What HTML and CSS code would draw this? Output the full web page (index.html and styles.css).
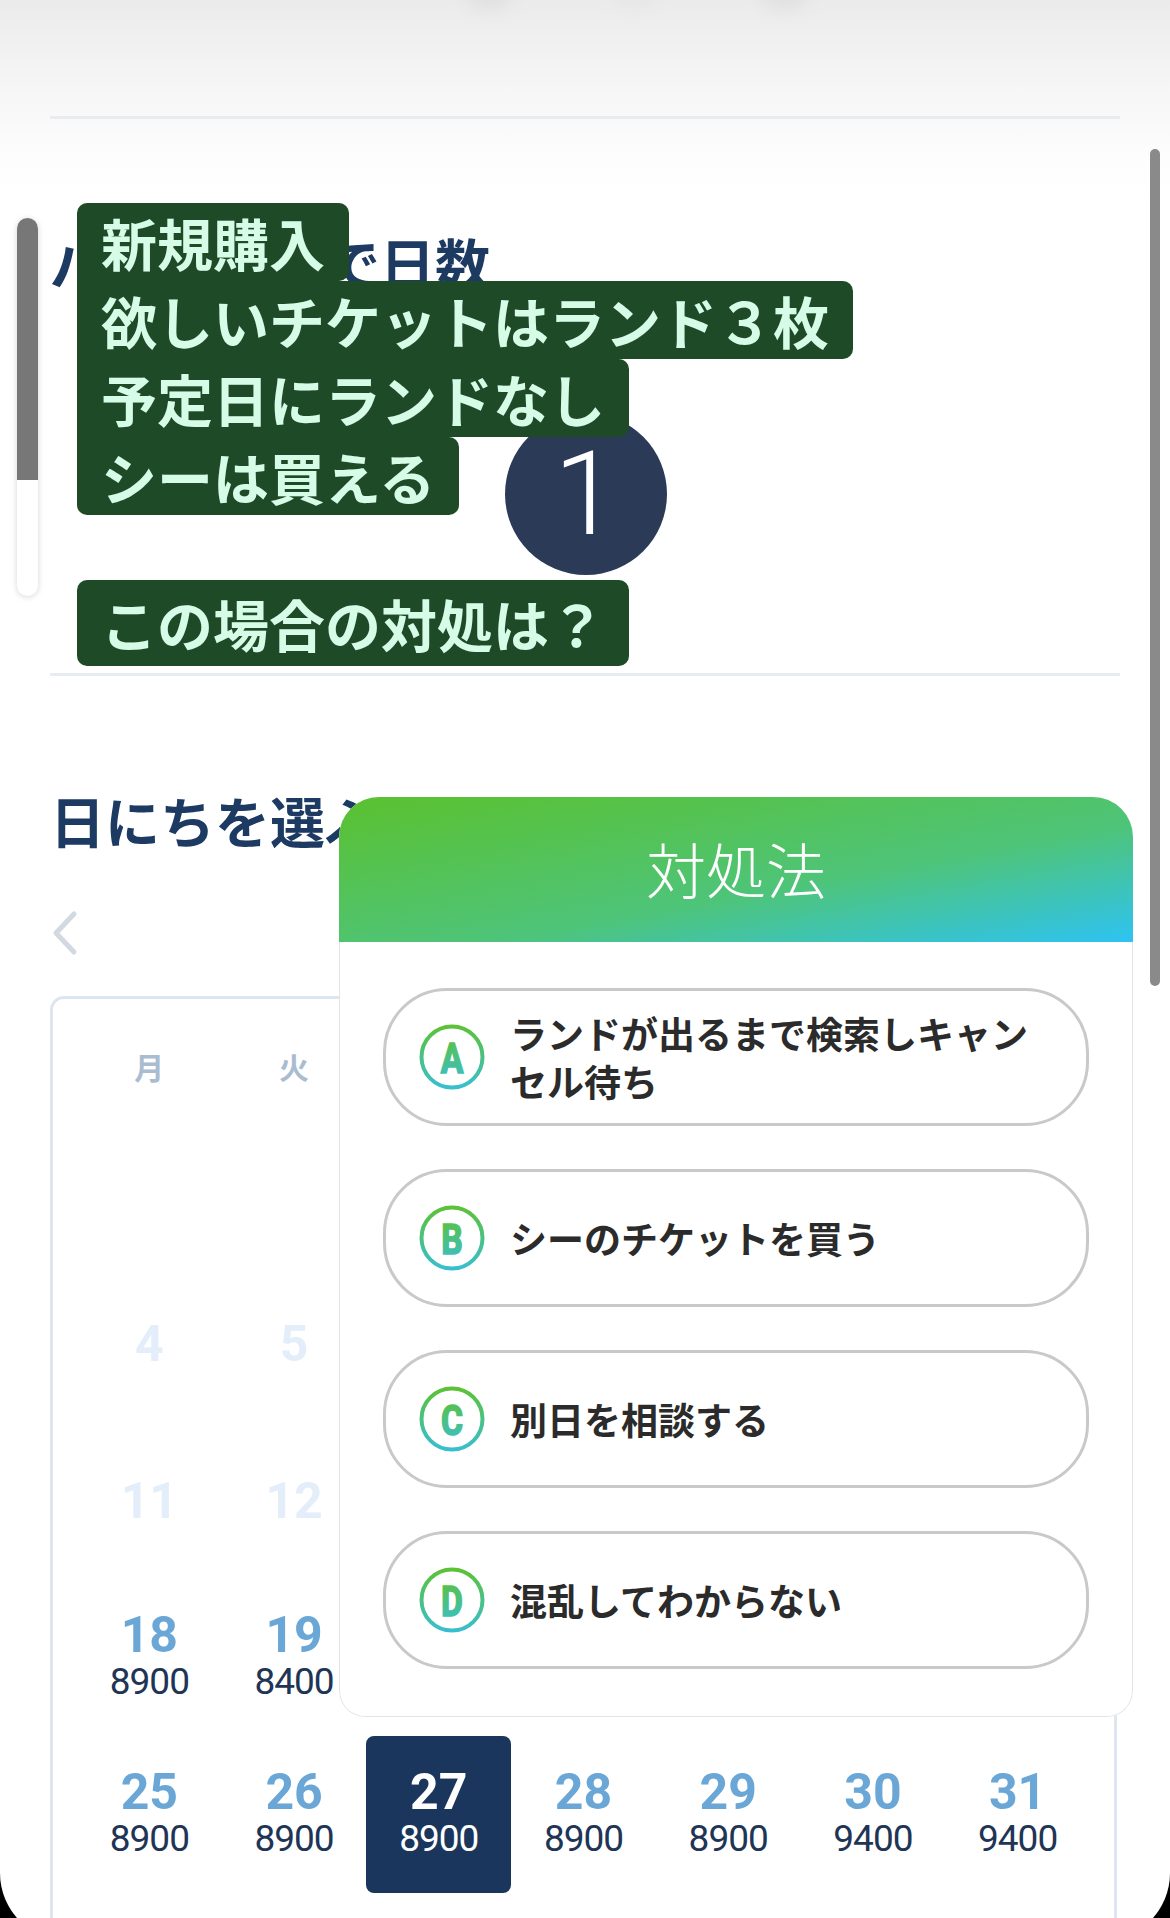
FILE: index.html
```html
<!DOCTYPE html>
<html lang="ja">
<head>
    <meta charset="UTF-8">
    <meta name="viewport" content="width=device-width, initial-scale=1.0">
    <title>チケット購入 - 対処法</title>
    <link rel="stylesheet" href="styles.css">
</head>
<body>
    <div class="screen">
        <div class="blur blur-1"></div>
        <div class="blur blur-2"></div>
        <div class="blur blur-3"></div>

        <div class="top-bar"></div>
        <div class="rule"></div>

        <section class="park">
            <h2 class="title">パスポートで日数</h2>
        </section>

        <div class="rule"></div>

        <section class="dates">
            <h2 class="title">日にちを選ぶ</h2>
            <svg class="back" viewBox="0 0 30 46" width="30" height="46">
                <polyline points="24,4 6,23 24,42" fill="none" stroke="#d3d9e1" stroke-width="5" stroke-linecap="round" stroke-linejoin="round"/>
            </svg>

            <div class="calendar">
                <div class="week-head">
                    <span>月</span><span>火</span><span>水</span><span>木</span><span>金</span><span>土</span><span>日</span>
                </div>
                <div class="week">
                    <div class="day"></div>
                    <div class="day"></div>
                    <div class="day"></div>
                    <div class="day"></div>
                    <div class="day past"><span class="num">1</span></div>
                    <div class="day past"><span class="num">2</span></div>
                    <div class="day past"><span class="num">3</span></div>
                </div>
                <div class="week">
                    <div class="day past"><span class="num">4</span></div>
                    <div class="day past"><span class="num">5</span></div>
                    <div class="day past"><span class="num">6</span></div>
                    <div class="day past"><span class="num">7</span></div>
                    <div class="day past"><span class="num">8</span></div>
                    <div class="day past"><span class="num">9</span></div>
                    <div class="day past"><span class="num">10</span></div>
                </div>
                <div class="week">
                    <div class="day past"><span class="num">11</span></div>
                    <div class="day past"><span class="num">12</span></div>
                    <div class="day past"><span class="num">13</span></div>
                    <div class="day past"><span class="num">14</span></div>
                    <div class="day past"><span class="num">15</span></div>
                    <div class="day past"><span class="num">16</span></div>
                    <div class="day past"><span class="num">17</span></div>
                </div>
                <div class="week">
                    <div class="day"><span class="num">18</span><span class="price">8900</span></div>
                    <div class="day"><span class="num">19</span><span class="price">8400</span></div>
                    <div class="day"><span class="num">20</span><span class="price">8400</span></div>
                    <div class="day"><span class="num">21</span><span class="price">8400</span></div>
                    <div class="day"><span class="num">22</span><span class="price">8900</span></div>
                    <div class="day"><span class="num">23</span><span class="price">9400</span></div>
                    <div class="day"><span class="num">24</span><span class="price">9400</span></div>
                </div>
                <div class="week">
                    <div class="day"><span class="num">25</span><span class="price">8900</span></div>
                    <div class="day"><span class="num">26</span><span class="price">8900</span></div>
                    <div class="day on"><span class="num">27</span><span class="price">8900</span></div>
                    <div class="day"><span class="num">28</span><span class="price">8900</span></div>
                    <div class="day"><span class="num">29</span><span class="price">8900</span></div>
                    <div class="day"><span class="num">30</span><span class="price">9400</span></div>
                    <div class="day"><span class="num">31</span><span class="price">9400</span></div>
                </div>
            </div>
        </section>

        <!-- 左のスライダー -->
        <div class="slider"><div class="slider-fill"></div></div>
        <div class="scrollbar"></div>

        <!-- テロップ -->
        <div class="number-badge">1</div>
        <div class="captions">
            <span class="cap">新規購入</span>
            <span class="cap">欲しいチケットはランド３枚</span>
            <span class="cap">予定日にランドなし</span>
            <span class="cap">シーは買える</span>
            <span class="cap cap-ask">この場合の対処は？</span>
        </div>

        <svg class="defs" width="0" height="0">
            <defs>
                <linearGradient id="badgeGrad" x1="0" y1="0" x2="0" y2="1">
                    <stop offset="0" stop-color="#5cc236"/>
                    <stop offset="1" stop-color="#38bfcf"/>
                </linearGradient>
            </defs>
        </svg>

        <div class="modal">
            <div class="modal-head">対処法</div>
            <div class="modal-body">
                <div class="option">
                    <svg class="letter" viewBox="0 0 66 66" width="66" height="66">
                        <circle cx="33" cy="33" r="30.5" fill="none" stroke="url(#badgeGrad)" stroke-width="4"/>
                        <text transform="translate(33 48.5) scale(0.8 1)" text-anchor="middle" fill="url(#badgeGrad)" stroke="url(#badgeGrad)" stroke-width="1.6">A</text>
                    </svg>
                    <span class="option-text">ランドが出るまで検索しキャンセル待ち</span>
                </div>
                <div class="option">
                    <svg class="letter" viewBox="0 0 66 66" width="66" height="66">
                        <circle cx="33" cy="33" r="30.5" fill="none" stroke="url(#badgeGrad)" stroke-width="4"/>
                        <text transform="translate(33 48.5) scale(0.8 1)" text-anchor="middle" fill="url(#badgeGrad)" stroke="url(#badgeGrad)" stroke-width="1.6">B</text>
                    </svg>
                    <span class="option-text">シーのチケットを買う</span>
                </div>
                <div class="option">
                    <svg class="letter" viewBox="0 0 66 66" width="66" height="66">
                        <circle cx="33" cy="33" r="30.5" fill="none" stroke="url(#badgeGrad)" stroke-width="4"/>
                        <text transform="translate(33 48.5) scale(0.8 1)" text-anchor="middle" fill="url(#badgeGrad)" stroke="url(#badgeGrad)" stroke-width="1.6">C</text>
                    </svg>
                    <span class="option-text">別日を相談する</span>
                </div>
                <div class="option">
                    <svg class="letter" viewBox="0 0 66 66" width="66" height="66">
                        <circle cx="33" cy="33" r="30.5" fill="none" stroke="url(#badgeGrad)" stroke-width="4"/>
                        <text transform="translate(33 48.5) scale(0.8 1)" text-anchor="middle" fill="url(#badgeGrad)" stroke="url(#badgeGrad)" stroke-width="1.6">D</text>
                    </svg>
                    <span class="option-text">混乱してわからない</span>
                </div>
            </div>
        </div>

        <div class="screen-mask"></div>
    </div>
</body>
</html>
```

FILE: styles.css
```css
html, body {
    margin: 0;
    padding: 0;
    overflow: hidden;
}
body {
    font-family: "Noto Sans CJK JP", sans-serif;
    background: #fff;
}
.screen {
    position: relative;
    width: 1170px;
    height: 1918px;
    overflow: hidden;
    background: linear-gradient(#ebebeb 0, #f6f6f6 90px, #fdfdfd 160px, #fff 200px) no-repeat;
}
.blur {
    position: absolute;
    top: -24px;
    width: 46px;
    height: 34px;
    border-radius: 50%;
    background: #e0e0e0;
    filter: blur(8px);
}
.blur-1 { left: 466px; }
.blur-2 { left: 612px; opacity: 0.4; }
.blur-3 { left: 762px; }
.top-bar {
    height: 116px;
}
.rule {
    height: 3px;
    margin: 0 50px;
    background: #e8ebef;
}
.park {
    height: 554px;
    box-sizing: border-box;
    padding: 115px 50px 0;
}
.title {
    margin: 0;
    font-size: 55px;
    line-height: 55px;
    font-weight: 700;
    color: #1c3a62;
    white-space: nowrap;
}
.dates {
    padding: 116px 53px 0 50px;
}
.back {
    display: block;
    margin: 63px 0 40px 0;
}
.calendar {
    height: 1000px;
    padding: 0 24px;
    border: 3px solid #dde6f0;
    border-radius: 14px;
}
.week-head,
.week {
    display: grid;
    grid-template-columns: repeat(7, 1fr);
}
.week-head {
    padding: 50px 0 25px;
}
.week-head span {
    text-align: center;
    font-size: 30px;
    line-height: 34px;
    font-weight: 700;
    color: #a9bcd0;
}
.week {
    height: 157px;
}
.day {
    display: flex;
    flex-direction: column;
    align-items: center;
    justify-content: center;
    border-radius: 8px;
    font-family: Roboto, "Liberation Sans", sans-serif;
}
.num {
    font-size: 50px;
    line-height: 48px;
    font-weight: 700;
    color: #6aa7d6;
}
.price {
    font-size: 37px;
    line-height: 46px;
    letter-spacing: -1px;
    color: #1f3556;
}
.day.past .num {
    color: #e3eefa;
}
.day.on {
    background: #1b365d;
}
.day.on .num,
.day.on .price {
    color: #fff;
}
.slider {
    position: absolute;
    left: 17px;
    top: 218px;
    width: 21px;
    height: 378px;
    border-radius: 11px;
    background: #fff;
    box-shadow: 0 1px 6px rgba(0, 0, 0, 0.16);
    overflow: hidden;
}
.slider-fill {
    height: 262px;
    background: #777;
}
.scrollbar {
    position: absolute;
    left: 1150px;
    top: 149px;
    width: 10px;
    height: 837px;
    border-radius: 5px;
    background: #8a8a8a;
}
.number-badge {
    position: absolute;
    left: 505px;
    top: 413px;
    width: 162px;
    height: 162px;
    border-radius: 50%;
    background: #2a3a57;
    color: #fff;
    font-family: Roboto, "Liberation Sans", sans-serif;
    font-weight: 300;
    font-size: 116px;
    line-height: 162px;
    text-align: center;
    z-index: 2;
}
.captions {
    position: absolute;
    left: 77px;
    top: 203px;
    z-index: 3;
}
.cap {
    display: block;
    width: fit-content;
    height: 78px;
    padding: 0 24px;
    font-size: 56px;
    line-height: 78px;
    font-weight: 700;
    color: #d6fbe7;
    background: #1f4a28;
    border-radius: 0 10px 10px 0;
    white-space: nowrap;
}
.cap:first-child {
    border-top-left-radius: 10px;
}
.cap:nth-child(4) {
    border-bottom-left-radius: 10px;
}
.cap-ask {
    height: 86px;
    line-height: 86px;
    margin-top: 65px;
    border-radius: 10px;
}
.defs {
    position: absolute;
}
.modal {
    position: absolute;
    left: 339px;
    top: 797px;
    width: 794px;
    height: 920px;
    display: flex;
    flex-direction: column;
    border-radius: 40px 40px 26px 26px;
    overflow: hidden;
    background: #fff;
    z-index: 4;
}
.modal-head {
    height: 145px;
    flex: none;
    display: flex;
    align-items: center;
    justify-content: center;
    padding-bottom: 4px;
    box-sizing: border-box;
    background: linear-gradient(to bottom right, #5ac12f, #4ec47a 60%, #2ec3f3);
    color: #fff;
    font-size: 60px;
    font-weight: 300;
}
.modal-body {
    flex: 1;
    display: flex;
    flex-direction: column;
    gap: 43px;
    padding: 46px 43px;
    border: 1px solid #e4e4e4;
    border-top: 0;
    border-radius: 0 0 26px 26px;
}
.option {
    height: 138px;
    box-sizing: border-box;
    display: flex;
    align-items: center;
    gap: 25px;
    padding: 0 50px 0 33px;
    border: 3px solid #c9c9c9;
    border-radius: 64px;
}
.letter {
    flex: none;
}
.letter text {
    font-family: Roboto, "Liberation Sans", sans-serif;
    font-size: 42px;
    font-weight: 700;
}
.option-text {
    font-size: 37px;
    line-height: 48px;
    font-weight: 700;
    color: #2b2b2b;
}
.screen-mask {
    position: absolute;
    left: 0;
    top: 0;
    width: 1170px;
    height: 1941px;
    border-radius: 0 0 68px 68px;
    box-shadow: 0 0 0 120px #000;
    pointer-events: none;
    z-index: 10;
}
```
